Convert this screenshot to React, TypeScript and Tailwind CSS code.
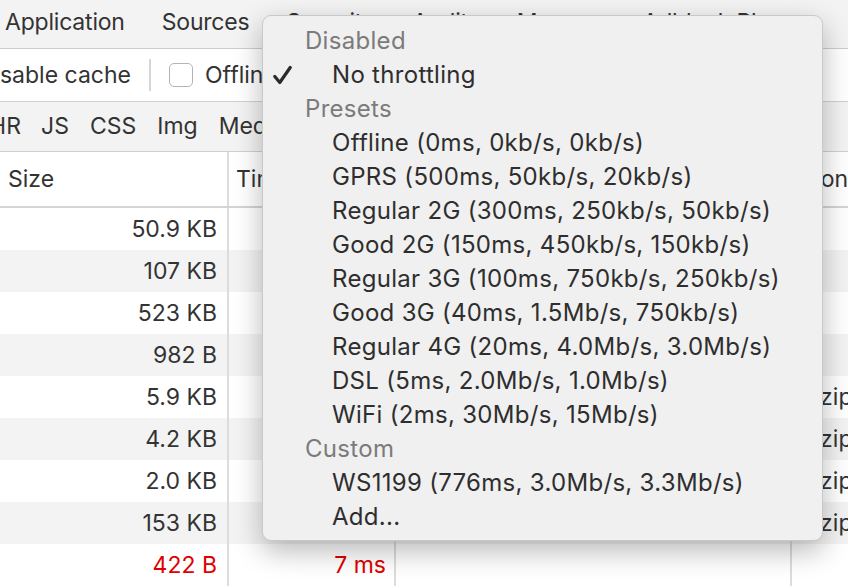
import React from 'react';

const tabs = ['Application', 'Sources', 'Security', 'Audits', 'Memory', 'Adblock Plus'];
const filters = ['JS', 'CSS', 'Img', 'Media', 'Font', 'Doc', 'WS', 'Manifest', 'Other'];

const rows = [
  { size: '50.9 KB', enc: '' },
  { size: '107 KB', enc: '' },
  { size: '523 KB', enc: '' },
  { size: '982 B', enc: '' },
  { size: '5.9 KB', enc: 'gzip' },
  { size: '4.2 KB', enc: 'gzip' },
  { size: '2.0 KB', enc: 'gzip' },
  { size: '153 KB', enc: 'gzip' },
  { size: '422 B', enc: '', time: '7 ms', error: true },
];

type MenuEntry = { label: string; header?: boolean; checked?: boolean };

const menu: MenuEntry[] = [
  { label: 'Disabled', header: true },
  { label: 'No throttling', checked: true },
  { label: 'Presets', header: true },
  { label: 'Offline (0ms, 0kb/s, 0kb/s)' },
  { label: 'GPRS (500ms, 50kb/s, 20kb/s)' },
  { label: 'Regular 2G (300ms, 250kb/s, 50kb/s)' },
  { label: 'Good 2G (150ms, 450kb/s, 150kb/s)' },
  { label: 'Regular 3G (100ms, 750kb/s, 250kb/s)' },
  { label: 'Good 3G (40ms, 1.5Mb/s, 750kb/s)' },
  { label: 'Regular 4G (20ms, 4.0Mb/s, 3.0Mb/s)' },
  { label: 'DSL (5ms, 2.0Mb/s, 1.0Mb/s)' },
  { label: 'WiFi (2ms, 30Mb/s, 15Mb/s)' },
  { label: 'Custom', header: true },
  { label: 'WS1199 (776ms, 3.0Mb/s, 3.3Mb/s)' },
  { label: 'Add...' },
];

function Check() {
  return (
    <svg width="19" height="20" viewBox="0 0 19 20">
      <path d="M1.8 11.5 L6.8 17.5 L17.2 2.5" fill="none" stroke="#2b2b2b" strokeWidth="3.2" strokeLinecap="round" strokeLinejoin="round" />
    </svg>
  );
}

export default function App() {
  return (
    <div className="relative w-[848px] h-[588px] overflow-hidden bg-white font-['Inter',sans-serif] text-[23px] text-[#333] whitespace-nowrap">
      {/* Panel tabs */}
      <div className="flex h-[49px] items-center gap-[37px] border-b border-[#cdcdcd] bg-[#f3f3f3] pl-[5px] pb-[4px] tracking-[-0.2px]">
        {tabs.map((t) => (
          <span key={t} className="shrink-0">{t}</span>
        ))}
      </div>

      {/* Toolbar */}
      <div className="flex h-[53px] items-center border-b border-[#d0d0d0] bg-white">
        <div className="flex w-[131px] shrink-0 justify-end overflow-hidden">
          <span>Disable cache</span>
        </div>
        <div className="ml-[18px] h-[32px] w-[2px] shrink-0 bg-[#d6d6d6]" />
        <div className="ml-[18px] h-[24px] w-[24px] shrink-0 rounded-[5px] border border-[#b4b4b4] bg-white" />
        <span className="ml-[12px] shrink-0">Offline</span>
      </div>

      {/* Filter bar */}
      <div className="flex h-[50px] items-center border-b border-[#d0d0d0] bg-[#f3f3f3]">
        <div className="flex w-[21px] shrink-0 justify-end overflow-hidden">
          <span>XHR</span>
        </div>
        <div className="ml-[20px] flex shrink-0 gap-[21px]">
          {filters.map((f) => (
            <span key={f}>{f}</span>
          ))}
        </div>
      </div>

      {/* Table header */}
      <div className="flex h-[56px] border-b-2 border-[#d4d4d4] bg-white">
        <div className="flex w-[229px] shrink-0 items-center border-r-2 border-[#dcdcdc] pl-[8px]">Size</div>
        <div className="flex w-[165px] shrink-0 items-center pl-[7px]">Time</div>
        <div className="w-[398px] shrink-0 border-r-2 border-[#dcdcdc]" />
        <div className="flex shrink-0 items-center pl-[12px]">Content-Encoding</div>
      </div>

      {/* Rows */}
      {rows.map((r, i) => (
        <div key={i} className={`flex h-[42px] ${i % 2 === 1 ? 'bg-[#f3f3f3]' : 'bg-white'} ${r.error ? 'text-[#e00000]' : ''}`}>
          <div className="flex w-[229px] shrink-0 items-center justify-end border-r-2 border-[#dcdcdc] pr-[10px]">{r.size}</div>
          <div className="flex w-[165px] shrink-0 items-center justify-end pr-[8px]">{r.time ?? ''}</div>
          <div className="w-[398px] shrink-0 border-l-2 border-r-2 border-[#dcdcdc]" />
          <div className="flex shrink-0 items-center pl-[14px]">{r.enc}</div>
        </div>
      ))}

      {/* Throttling dropdown */}
      <div className="absolute left-[262px] top-[15px] w-[561px] rounded-[9px] border border-[#c9c9c9] bg-[#f0f0f0] pt-[8px] pb-[6px] text-[24px] tracking-[0.3px] shadow-[0_10px_28px_rgba(0,0,0,0.28)]">
        {menu.map((m) =>
          m.header ? (
            <div key={m.label} className="flex h-[34px] items-center pl-[42px] text-[#7b7b7b]">
              {m.label}
            </div>
          ) : (
            <div key={m.label} className="flex h-[34px] items-center text-[#2e2e2e]">
              <div className="flex w-[69px] shrink-0 items-center pl-[10px]">{m.checked && <Check />}</div>
              <span>{m.label}</span>
            </div>
          )
        )}
      </div>
    </div>
  );
}
